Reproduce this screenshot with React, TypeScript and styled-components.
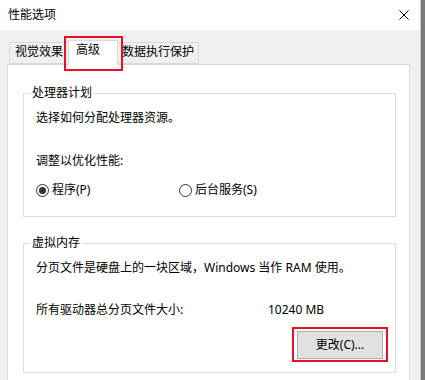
import React from "react";
import styled, { createGlobalStyle } from "styled-components";

const Global = createGlobalStyle`
  html, body { margin: 0; padding: 0; background: #6b6b6b; }
  body {
    width: 425px; height: 380px; overflow: hidden;
    font-family: "Noto Sans", "Noto Sans CJK SC", sans-serif;
    font-size: 12px; color: #000;
    -webkit-font-smoothing: antialiased;
  }
`;

const Screen = styled.div`
  display: flex;
  width: 425px;
  height: 380px;
  overflow: hidden;
  background: #7a7a7a;
`;

const Dialog = styled.div`
  width: 420px;
  height: 380px;
  display: flex;
  flex-direction: column;
  background: #f0f0f0;
  border-right: 1px solid #c8c8c8;
`;

const TitleBar = styled.div`
  height: 30px;
  flex: none;
  display: flex;
  align-items: center;
  justify-content: space-between;
  background: #fff;
  padding: 0 11px 0 8px;
`;

const Title = styled.span`
  line-height: 16px;
  font-size: 12px;
`;

const CloseIcon = styled.svg`
  width: 10px;
  height: 10px;
  display: block;
`;

const Body = styled.div`
  flex: 1;
  display: flex;
  flex-direction: column;
  padding: 12px 10px 0 7px;
  min-height: 0;
`;

const TabStrip = styled.div`
  display: flex;
  height: 22px;
  margin-left: 2px;
  position: relative;
  z-index: 1;
`;

const Tab = styled.div<{ $w: number; $active?: boolean }>`
  position: relative;
  box-sizing: border-box;
  width: ${(p) => p.$w + (p.$active ? 4 : 0)}px;
  height: ${(p) => (p.$active ? 25 : 22)}px;
  margin: ${(p) => (p.$active ? "-2px -2px 0 -2px" : "0")};
  padding: 1px 0 0 ${(p) => (p.$active ? 7 : 5)}px;
  border: 1px solid #d9d9d9;
  border-bottom: ${(p) => (p.$active ? "none" : "1px solid #d9d9d9")};
  background: ${(p) => (p.$active ? "#fff" : "#f0f0f0")};
  z-index: ${(p) => (p.$active ? 2 : 0)};
  line-height: 16px;
  white-space: nowrap;
`;

const Highlight = styled.span<{ $t: number; $r: number; $b: number; $l: number }>`
  position: absolute;
  top: ${(p) => -p.$t}px;
  right: ${(p) => -p.$r}px;
  bottom: ${(p) => -p.$b}px;
  left: ${(p) => -p.$l}px;
  border: 2px solid #e81123;
  pointer-events: none;
`;

const Page = styled.div`
  flex: 1;
  background: #fff;
  border: 1px solid #d9d9d9;
  border-bottom: none;
  padding: 21px 13px 0 15px;
  display: flex;
  flex-direction: column;
  gap: 19px;
`;

const Group = styled.fieldset`
  margin: 0;
  padding: 0;
  border: 1px solid #dcdcdc;
  min-width: 0;
`;

const Legend = styled.legend`
  margin-left: 6px;
  padding: 0 2px;
  line-height: 14px;
  font-size: 12px;
`;

const GroupBody = styled.div<{ $pb: number }>`
  display: flex;
  flex-direction: column;
  padding: 10px 12px ${(p) => p.$pb}px 12px;
`;

const Line = styled.div<{ $mt?: number }>`
  line-height: 16px;
  height: 16px;
  margin-top: ${(p) => p.$mt ?? 0}px;
  white-space: nowrap;
`;

const RadioRow = styled.div`
  display: flex;
  height: 16px;
  margin-top: 13px;
`;

const RadioOption = styled.label<{ $w?: number }>`
  display: flex;
  align-items: center;
  gap: 3px;
  width: ${(p) => (p.$w ? `${p.$w}px` : "auto")};
  line-height: 16px;
  white-space: nowrap;
`;

const RadioCircle = styled.span<{ $checked?: boolean }>`
  box-sizing: border-box;
  width: 13px;
  height: 13px;
  border-radius: 50%;
  border: 1px solid #333;
  background: #fff;
  display: flex;
  align-items: center;
  justify-content: center;
  &::after {
    content: "";
    width: 7px;
    height: 7px;
    border-radius: 50%;
    background: #333;
    display: ${(p) => (p.$checked ? "block" : "none")};
  }
`;

const InfoRow = styled.div`
  display: flex;
  line-height: 16px;
  height: 16px;
  margin-top: 26px;
  white-space: nowrap;
`;

const InfoLabel = styled.span`
  width: 232px;
`;

const ButtonRow = styled.div`
  display: flex;
  justify-content: flex-end;
  margin-top: 13px;
`;

const Button = styled.div`
  position: relative;
  box-sizing: border-box;
  width: 86px;
  height: 28px;
  background: #e1e1e1;
  border: 1px solid #adadad;
  display: flex;
  align-items: center;
  justify-content: center;
  line-height: 16px;
`;

export default function App() {
  return (
    <>
      <Global />
      <Screen>
        <Dialog>
          <TitleBar>
            <Title>性能选项</Title>
            <CloseIcon viewBox="0 0 10 10">
              <path d="M0.5 0.5 L9.5 9.5 M9.5 0.5 L0.5 9.5" stroke="#000" strokeWidth="1" fill="none" />
            </CloseIcon>
          </TitleBar>
          <Body>
            <TabStrip>
              <Tab $w={61}>视觉效果</Tab>
              <Tab $w={46} $active>
                高级
                <Highlight $t={5} $r={6} $b={6} $l={5} />
              </Tab>
              <Tab $w={83}>数据执行保护</Tab>
            </TabStrip>
            <Page>
              <Group>
                <Legend>处理器计划</Legend>
                <GroupBody $pb={18}>
                  <Line>选择如何分配处理器资源。</Line>
                  <Line $mt={27}>调整以优化性能:</Line>
                  <RadioRow>
                    <RadioOption $w={143}>
                      <RadioCircle $checked />
                      程序(P)
                    </RadioOption>
                    <RadioOption>
                      <RadioCircle />
                      后台服务(S)
                    </RadioOption>
                  </RadioRow>
                </GroupBody>
              </Group>
              <Group>
                <Legend>虚拟内存</Legend>
                <GroupBody $pb={13}>
                  <Line>分页文件是硬盘上的一块区域，Windows 当作 RAM 使用。</Line>
                  <InfoRow>
                    <InfoLabel>所有驱动器总分页文件大小:</InfoLabel>
                    <span>10240 MB</span>
                  </InfoRow>
                  <ButtonRow>
                    <Button>
                      更改(C)...
                      <Highlight $t={5} $r={6} $b={4} $l={6} />
                    </Button>
                  </ButtonRow>
                </GroupBody>
              </Group>
            </Page>
          </Body>
        </Dialog>
      </Screen>
    </>
  );
}
